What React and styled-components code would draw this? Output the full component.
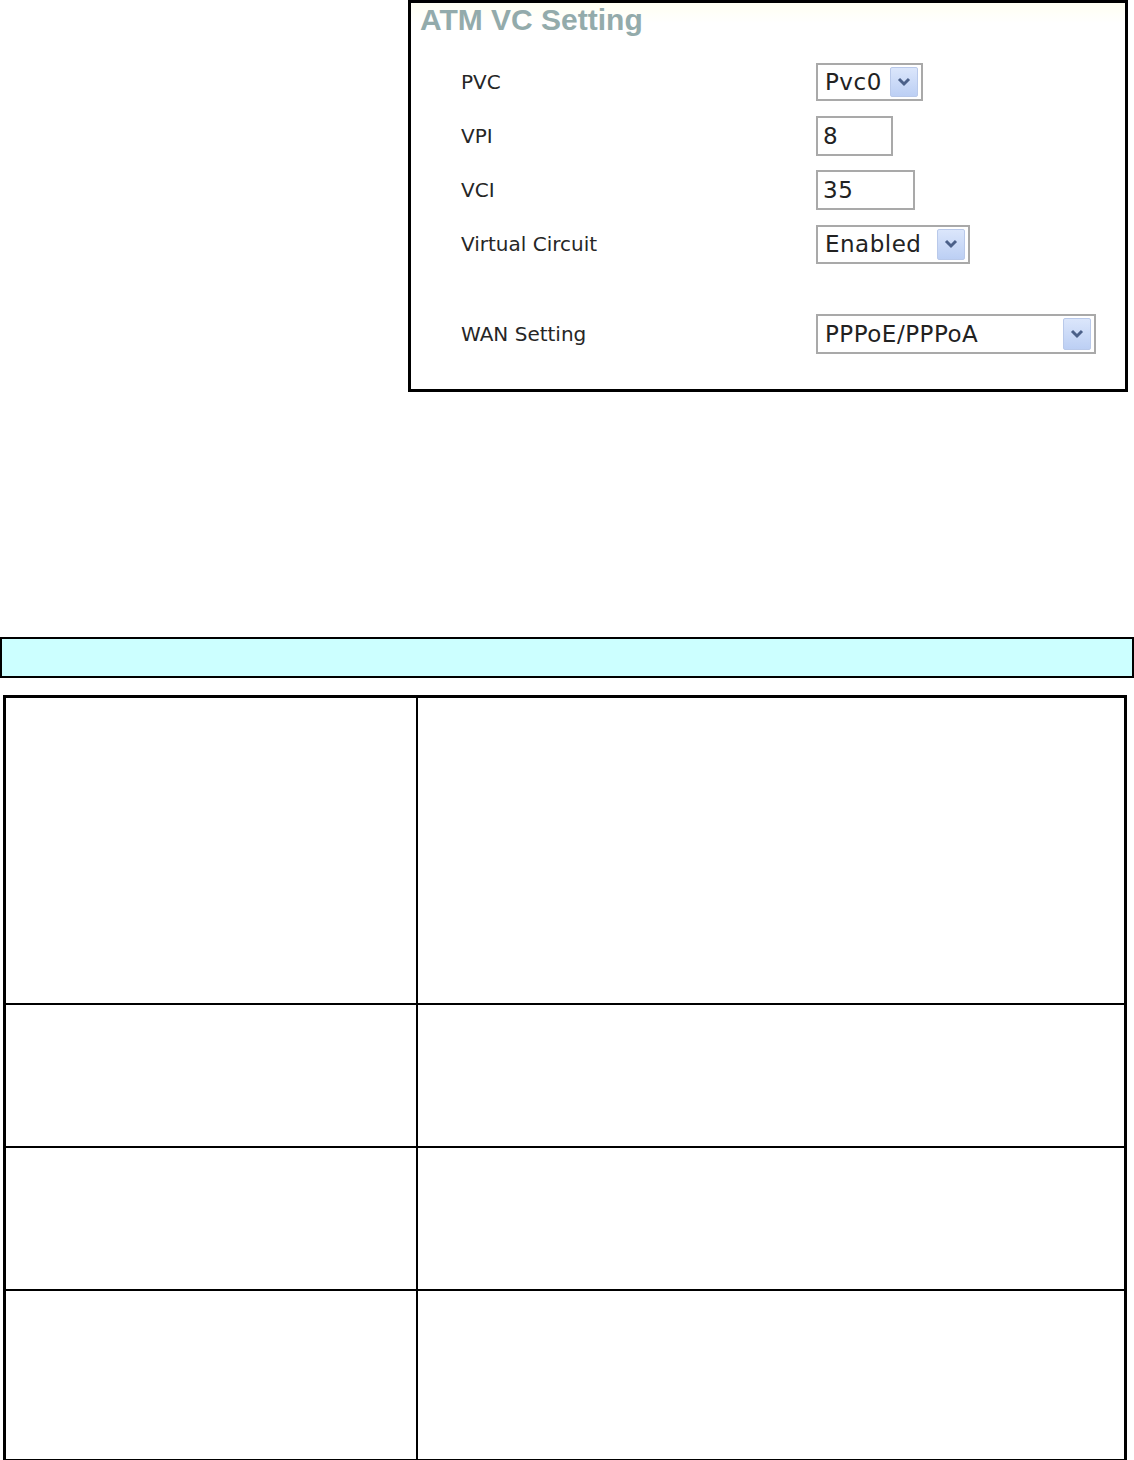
import React from 'react';
import styled, { createGlobalStyle } from 'styled-components';

const GlobalStyle = createGlobalStyle`
  * { box-sizing: border-box; }
  body {
    margin: 0;
    background: #fff;
    font-family: "DejaVu Sans", "Liberation Sans", sans-serif;
  }
`

const Page = styled.div`
  width: 1134px;
  height: 1460px;
  overflow: hidden;
`

// the pasted router screenshot
const Shot = styled.div`
  margin-left: 408px;
  width: 720px;
  height: 392px;
  border: 3px solid #000;
  background: #fff;
`

const Title = styled.h1`
  margin: 0;
  height: 52px;
  padding: 0 0 0 9px;
  font-family: "Liberation Sans", Arial, sans-serif;
  font-weight: bold;
  font-size: 30px;
  line-height: 34px;
  color: #93abab;
  background: linear-gradient(#fffff2, #fff 40%);
`

const Form = styled.div`
  display: grid;
  grid-template-columns: 355px 1fr;
  grid-template-rows: repeat(4, 54px) 36px 54px;
  padding-left: 50px;
`

const Label = styled.div`
  display: flex;
  align-items: center;
  font-size: 20px;
  color: #262626;
`

const Field = styled.div`
  display: flex;
  align-items: center;
`

const Gap = styled.div`
  grid-column: 1 / span 2;
`

const Box = styled.div`
  position: relative;
  display: flex;
  align-items: center;
  width: ${p => p.$w}px;
  height: ${p => p.$h || 39}px;
  border: 2px solid #a9a9a9;
  background: #fff;
  padding-left: ${p => p.$pad || 7}px;
  font-size: 23px;
  letter-spacing: 0.5px;
  color: #222;
`

const Arrow = styled.div`
  position: absolute;
  top: 2px;
  bottom: 2px;
  right: 3px;
  width: 28px;
  display: flex;
  align-items: center;
  justify-content: center;
  border: 1px solid #b9c9ea;
  border-radius: 2px;
  background: linear-gradient(#dbe6fb, #bccff4);
`

const Chevron = () => (
  <svg width="14" height="10" viewBox="0 0 14 10">
    <path d="M2 2 L7 7 L12 2" fill="none" stroke="#4b6089" strokeWidth="3" />
  </svg>
)

const Select = ({ w, h, children }) => (
  <Box $w={w} $h={h}>
    {children}
    <Arrow><Chevron /></Arrow>
  </Box>
)

const InfoBar = styled.div`
  margin-top: 245px;
  height: 41px;
  border: 2px solid #000;
  background: #ccffff;
`

const Table = styled.div`
  margin: 17px 0 0 3px;
  width: 1124px;
  border: 3px solid #000;
  border-bottom-width: 1px;
`

const Row = styled.div`
  display: grid;
  grid-template-columns: 410px 1fr;
  height: ${p => p.$h}px;
  & + & { border-top: 2px solid #000; }
`

const Cell = styled.div`
  & + & { border-left: 2px solid #000; }
`

const rows = [305, 143, 143, 170]

export default function App() {
  return (
    <Page>
      <GlobalStyle />
      <Shot>
        <Title>ATM VC Setting</Title>
        <Form>
          <Label>PVC</Label>
          <Field><Select w={107} h={38}>Pvc0</Select></Field>
          <Label>VPI</Label>
          <Field><Box $w={77} $h={40} $pad={5}>8</Box></Field>
          <Label>VCI</Label>
          <Field><Box $w={99} $h={40} $pad={5}>35</Box></Field>
          <Label>Virtual Circuit</Label>
          <Field><Select w={154} h={39}>Enabled</Select></Field>
          <Gap />
          <Label>WAN Setting</Label>
          <Field><Select w={280} h={40}>PPPoE/PPPoA</Select></Field>
        </Form>
      </Shot>
      <InfoBar />
      <Table>
        {rows.map((h, i) => (
          <Row key={i} $h={h}>
            <Cell />
            <Cell />
          </Row>
        ))}
      </Table>
    </Page>
  );
}
